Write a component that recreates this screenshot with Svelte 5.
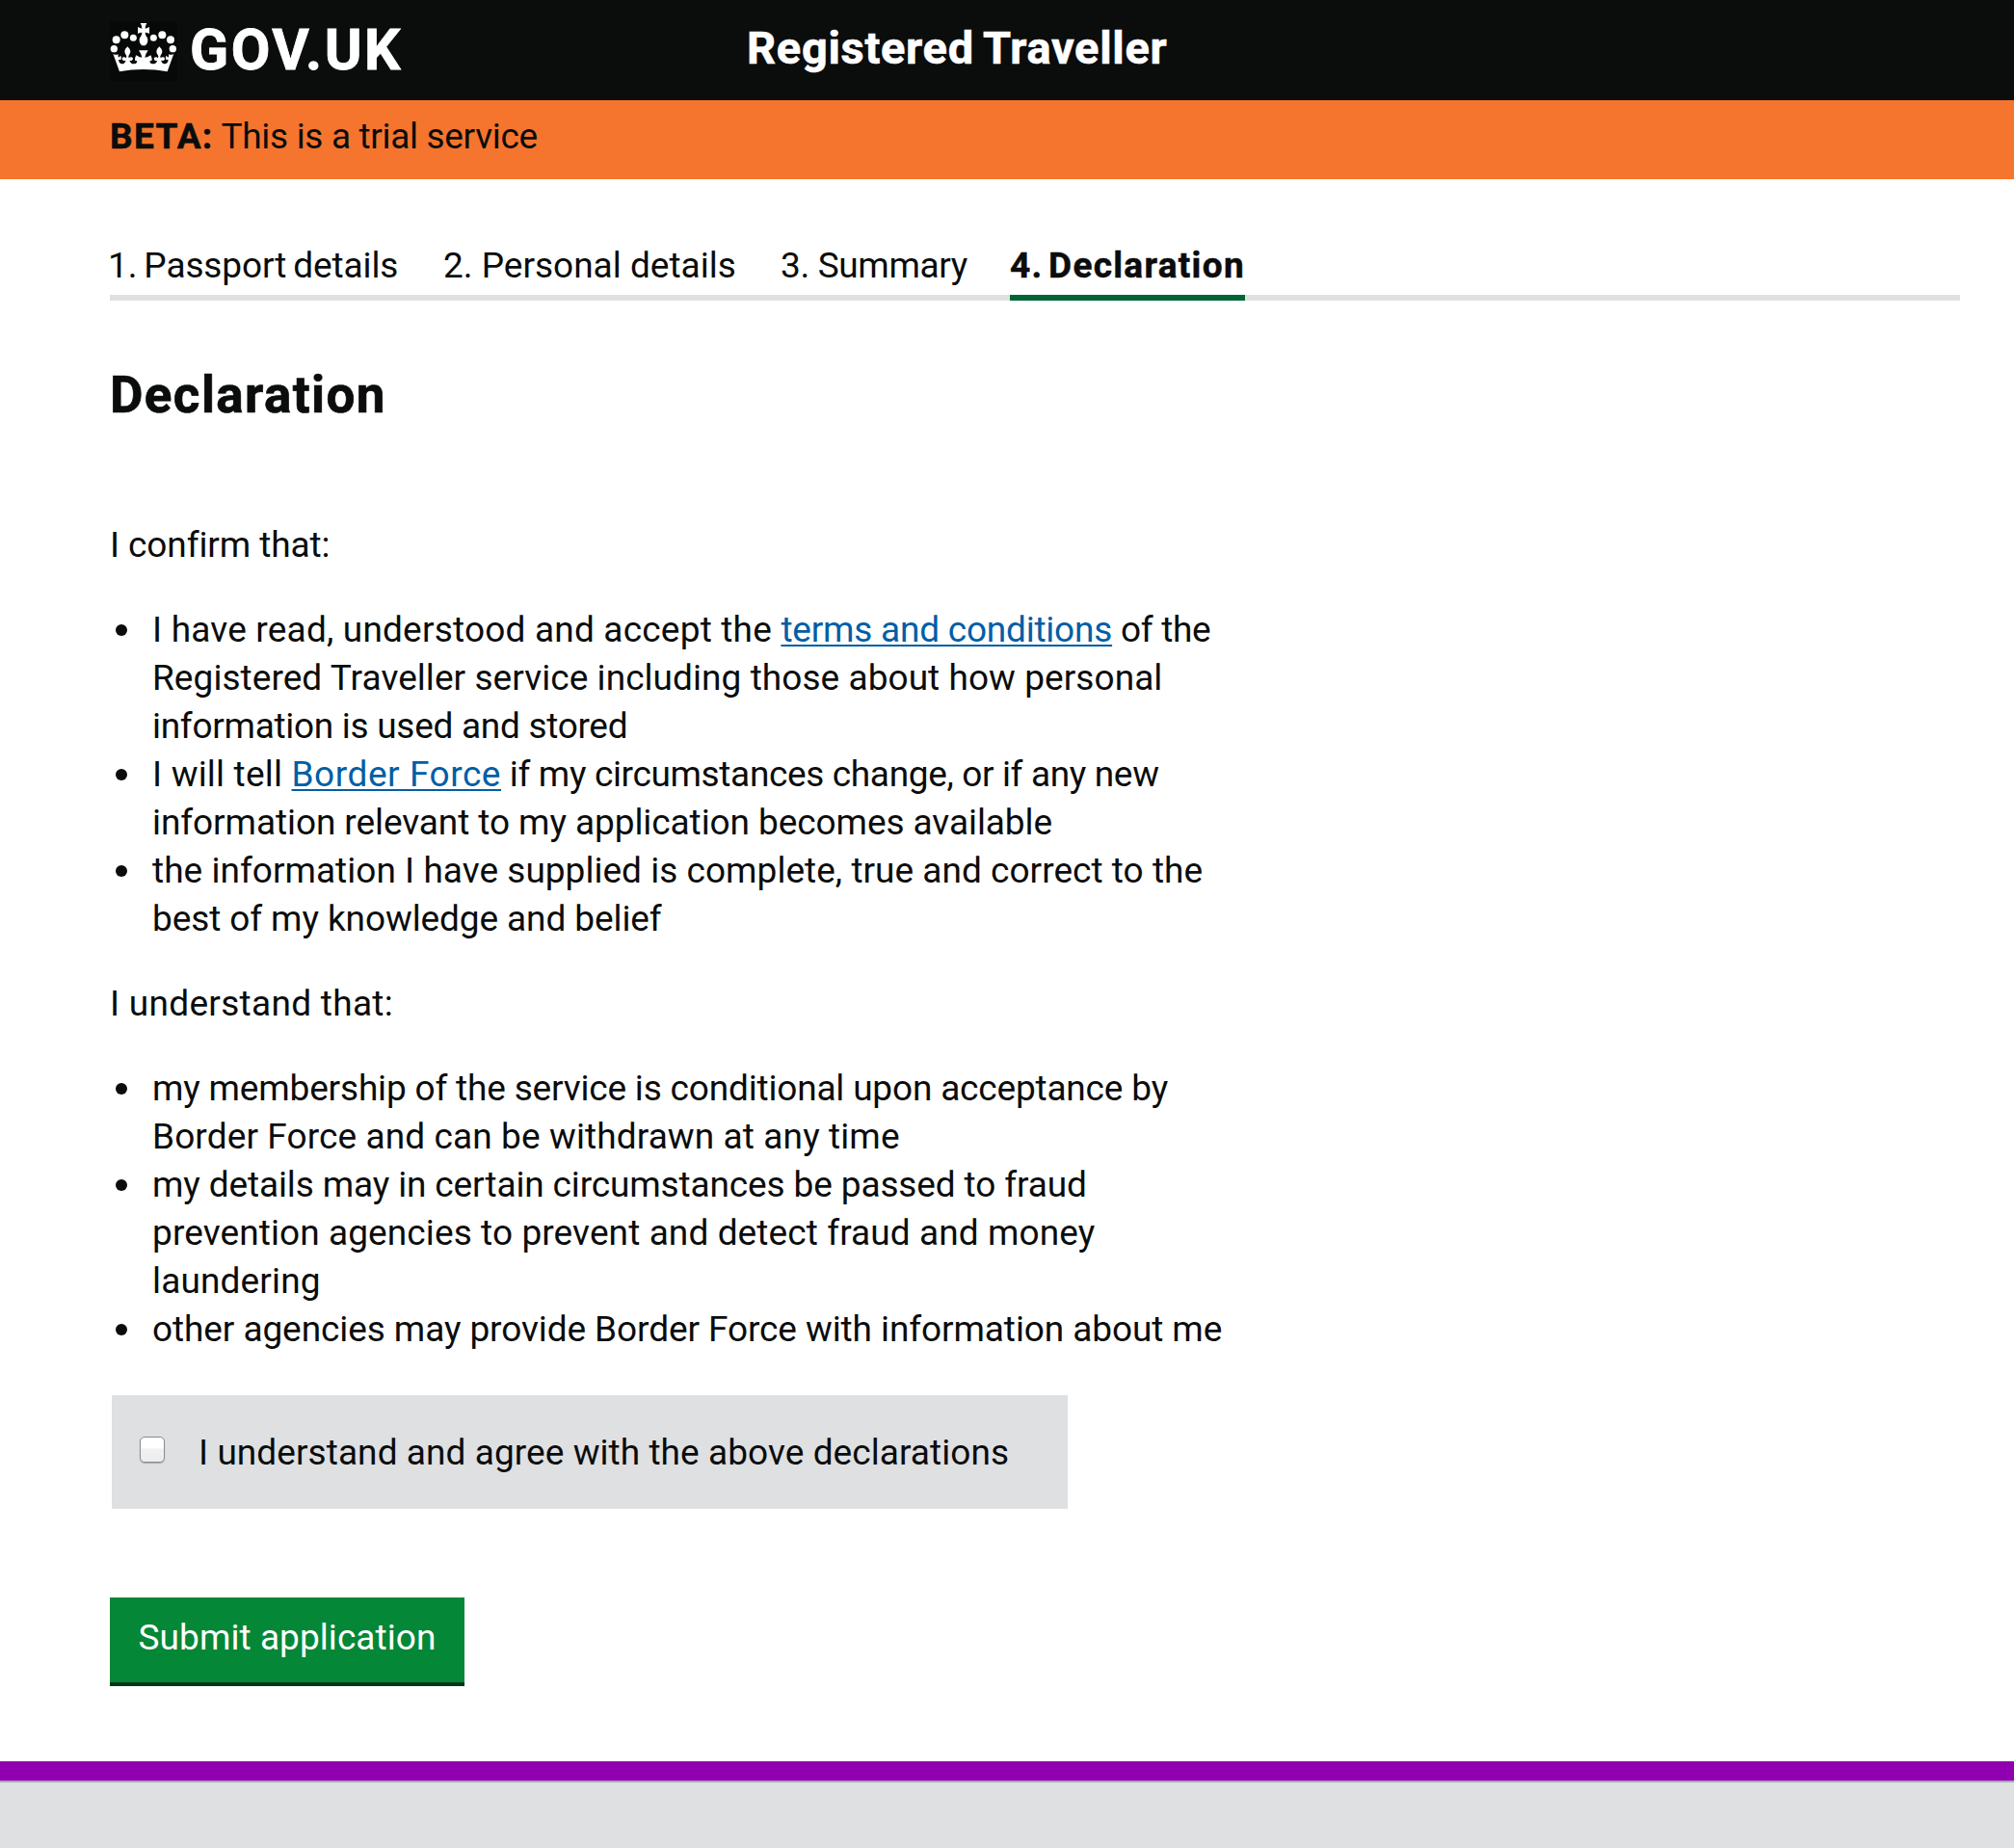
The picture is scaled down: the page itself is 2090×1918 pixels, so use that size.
<script>
  const steps = [
    { label: '1. Passport details', track: -0.12 },
    { label: '2. Personal details', track: 0 },
    { label: '3. Summary', track: -0.35 },
    { label: '4. Declaration', track: 1.3, current: true }
  ];

  // Each line is a list of text runs with their letter spacing; linked runs carry an href.
  const confirm = [
    [
      [
        { t: 'I have read, understood and accept the ', track: 0.2 },
        { t: 'terms and conditions', track: -0.22, href: '#terms' },
        { t: ' of the', track: -0.3 }
      ],
      [{ t: 'Registered Traveller service including those about how personal', track: 0.06 }],
      [{ t: 'information is used and stored', track: -0.29 }]
    ],
    [
      [
        { t: 'I will tell ', track: 0.2 },
        { t: 'Border Force', track: 0.55, href: '#border-force' },
        { t: ' if my circumstances change, or if any new', track: -0.35 }
      ],
      [{ t: 'information relevant to my application becomes available', track: -0.08 }]
    ],
    [
      [{ t: 'the information I have supplied is complete, true and correct to the', track: 0.03 }],
      [{ t: 'best of my knowledge and belief', track: -0.1 }]
    ]
  ];
  const understand = [
    [
      [{ t: 'my membership of the service is conditional upon acceptance by', track: -0.18 }],
      [{ t: 'Border Force and can be withdrawn at any time', track: 0.11 }]
    ],
    [
      [{ t: 'my details may in certain circumstances be passed to fraud', track: -0.13 }],
      [{ t: 'prevention agencies to prevent and detect fraud and money', track: 0.1 }],
      [{ t: 'laundering', track: 0.15 }]
    ],
    [[{ t: 'other agencies may provide Border Force with information about me', track: -0.09 }]]
  ];
</script>

{#snippet bullets(items)}
  <ul class="bullets">
    {#each items as lines}
      <li>
        {#each lines as runs}
          <span class="line">{#each runs as run}{#if run.href}<a href={run.href} style="letter-spacing: {run.track}px">{run.t}</a>{:else}<span style="letter-spacing: {run.track}px">{run.t}</span>{/if}{/each}</span>
        {/each}
      </li>
    {/each}
  </ul>
{/snippet}

<div class="page">
  <header class="top">
    <div class="brand">
      <svg class="crown" viewBox="12 6 210 186" aria-hidden="true">
        <rect x="12" y="6" width="210" height="186" fill="#070808" />
        <g fill="#fff">
          <circle cx="25" cy="92" r="11" /><circle cx="32" cy="64" r="12" />
          <circle cx="58" cy="49" r="12" /><circle cx="85" cy="58" r="10.5" />
          <circle cx="148" cy="58" r="10.5" /><circle cx="175" cy="49" r="12" />
          <circle cx="201" cy="64" r="12" /><circle cx="208" cy="92" r="11" />
          <path d="M107 12h20q-5 8-5 17 7-1 13-5v21q-6-4-13-4 0 5 2 9 7 8 6 18-3 14-13 14t-13-14q-1-10 6-18 2-4 2-9-7 0-13 4V24q6 4 13 5 0-9-5-17Z" />
          <path id="crown-half" d="M117 156Q78 156 42 163L22 107Q29 113 38 109Q37 115 39 119L46 113Q49 120 46 127Q42 124 39 127Q41 139 50 139Q58 139 62 128Q54 131 50 125Q49 117 56 118Q61 118 63 121L64 115Q57 105 58 100Q60 91 67 85Q74 91 76 100Q77 105 70 115L71 121Q74 117 80 118Q86 120 83 126Q80 131 73 128Q77 139 86 139Q95 139 97 131Q93 127 90 129Q89 120 94 112Q103 119 112 119Q110 108 102 97L117 97Z" />
          <use href="#crown-half" transform="matrix(-1 0 0 1 233 0)" />
        </g>
      </svg>
      <span class="wordmark">GOV.UK</span>
    </div>
    <span class="service">Registered Traveller</span>
  </header>

  <div class="phase"><strong>BETA:</strong><span>This is a trial service</span></div>

  <main>
    <nav>
      <ol class="steps">
        {#each steps as step}
          <li class:current={step.current} style="letter-spacing: {step.track}px">{step.label}</li>
        {/each}
      </ol>
    </nav>

    <h1>Declaration</h1>

    <p class="lead confirm">I confirm that:</p>
    {@render bullets(confirm)}
    <p class="lead">I understand that:</p>
    {@render bullets(understand)}

    <label class="agree">
      <input type="checkbox" />
      <span>I understand and agree with the above declarations</span>
    </label>

    <button type="button">Submit application</button>
  </main>

  <footer></footer>
</div>

<style>
  :global(body) {
    background: #fff;
  }
  .page {
    display: flex;
    flex-direction: column;
    min-height: 1918px;
    font: 37px/50px Roboto, 'Liberation Sans', sans-serif;
    color: #0b0c0c;
    font-variant-ligatures: none;
  }
  .top {
    box-sizing: border-box;
    display: grid;
    grid-template-columns: 661px 1fr;
    height: 104px;
    padding-left: 114px;
    background: #0b0c0c;
    color: #fff;
    font-weight: 700;
    white-space: nowrap;
  }
  .brand {
    display: flex;
    padding-top: 22px;
    gap: 13px;
  }
  .crown {
    width: 70px;
    height: 62px;
  }
  .wordmark {
    font-size: 59px;
    line-height: 60px;
    letter-spacing: 2.5px;
    -webkit-text-stroke: 0.8px;
  }
  .service {
    padding-top: 20px;
    font-size: 47px;
    line-height: 60px;
    letter-spacing: 0.7px;
    word-spacing: -2px;
    -webkit-text-stroke: 0.6px;
  }
  .phase {
    box-sizing: border-box;
    display: flex;
    gap: 8px;
    height: 82px;
    padding: 13px 0 0 114px;
    background: #f5752e;
    letter-spacing: -0.33px;
  }
  .phase strong {
    letter-spacing: 1.3px;
    -webkit-text-stroke: 0.5px;
  }
  main {
    display: flex;
    flex-direction: column;
    align-items: flex-start;
    padding: 65px 56px 78px 114px;
  }
  nav {
    align-self: stretch;
  }
  ol,
  ul,
  p,
  h1 {
    margin: 0;
    padding: 0;
    list-style: none;
  }
  .steps {
    display: grid;
    grid-template-columns: 346px 350px 238px 244px 1fr;
    background: linear-gradient(#dee0e2, #dee0e2) left bottom / 100% 6px no-repeat;
    white-space: nowrap;
  }
  .steps li {
    padding-bottom: 5px;
    border-bottom: 6px solid transparent;
  }
  .steps li:first-child {
    text-indent: -2px;
    word-spacing: -2px;
  }
  .steps .current {
    border-color: #006435;
    font-weight: 700;
    word-spacing: -5px;
    -webkit-text-stroke: 0.5px;
  }
  h1 {
    margin-top: 68px;
    font-size: 53px;
    line-height: 60px;
    letter-spacing: 1.4px;
    -webkit-text-stroke: 0.7px;
  }
  .lead {
    margin: 38px 0;
    letter-spacing: 0.3px;
  }
  .confirm {
    margin-top: 101px;
    letter-spacing: -0.1px;
  }
  .bullets {
    padding-left: 44px;
    white-space: nowrap;
  }
  .bullets li {
    position: relative;
  }
  .bullets li::before {
    content: '';
    position: absolute;
    left: -38px;
    top: 19px;
    width: 12px;
    height: 12px;
    border-radius: 50%;
    background: #0b0c0c;
  }
  .line {
    display: block;
    white-space: pre;
  }
  a {
    color: #005ea5;
    text-decoration: underline;
    text-decoration-thickness: 2px;
    text-decoration-skip-ink: none;
    text-underline-offset: 3px;
  }
  .agree {
    box-sizing: border-box;
    display: flex;
    align-items: flex-start;
    gap: 35px;
    width: 992px;
    height: 118px;
    margin: 43px 0 0 2px;
    padding: 35px 0 0 29px;
    background: #dee0e2;
    letter-spacing: 0.07px;
  }
  .agree input {
    appearance: none;
    box-sizing: border-box;
    width: 26px;
    height: 27px;
    margin: 8px 0 0;
    border: 1.5px solid #8c8c8e;
    border-radius: 5px;
    background: linear-gradient(#fff 0 40%, #f1f1f1 50%, #ececec);
    box-shadow: 0 1px 1px #a9a9ab;
  }
  button {
    box-sizing: border-box;
    width: 368px;
    height: 92px;
    margin-top: 92px;
    padding: 0 0 4px;
    border: 0;
    border-bottom: 4px solid #003618;
    background: #048737;
    color: #fff;
    font: inherit;
    letter-spacing: 0.07px;
  }
  footer {
    flex: 1;
    border-top: 20px solid #9100b0;
    background: linear-gradient(#a1acb2, #a1acb2) top / 100% 2px no-repeat #dee0e2;
  }
</style>
